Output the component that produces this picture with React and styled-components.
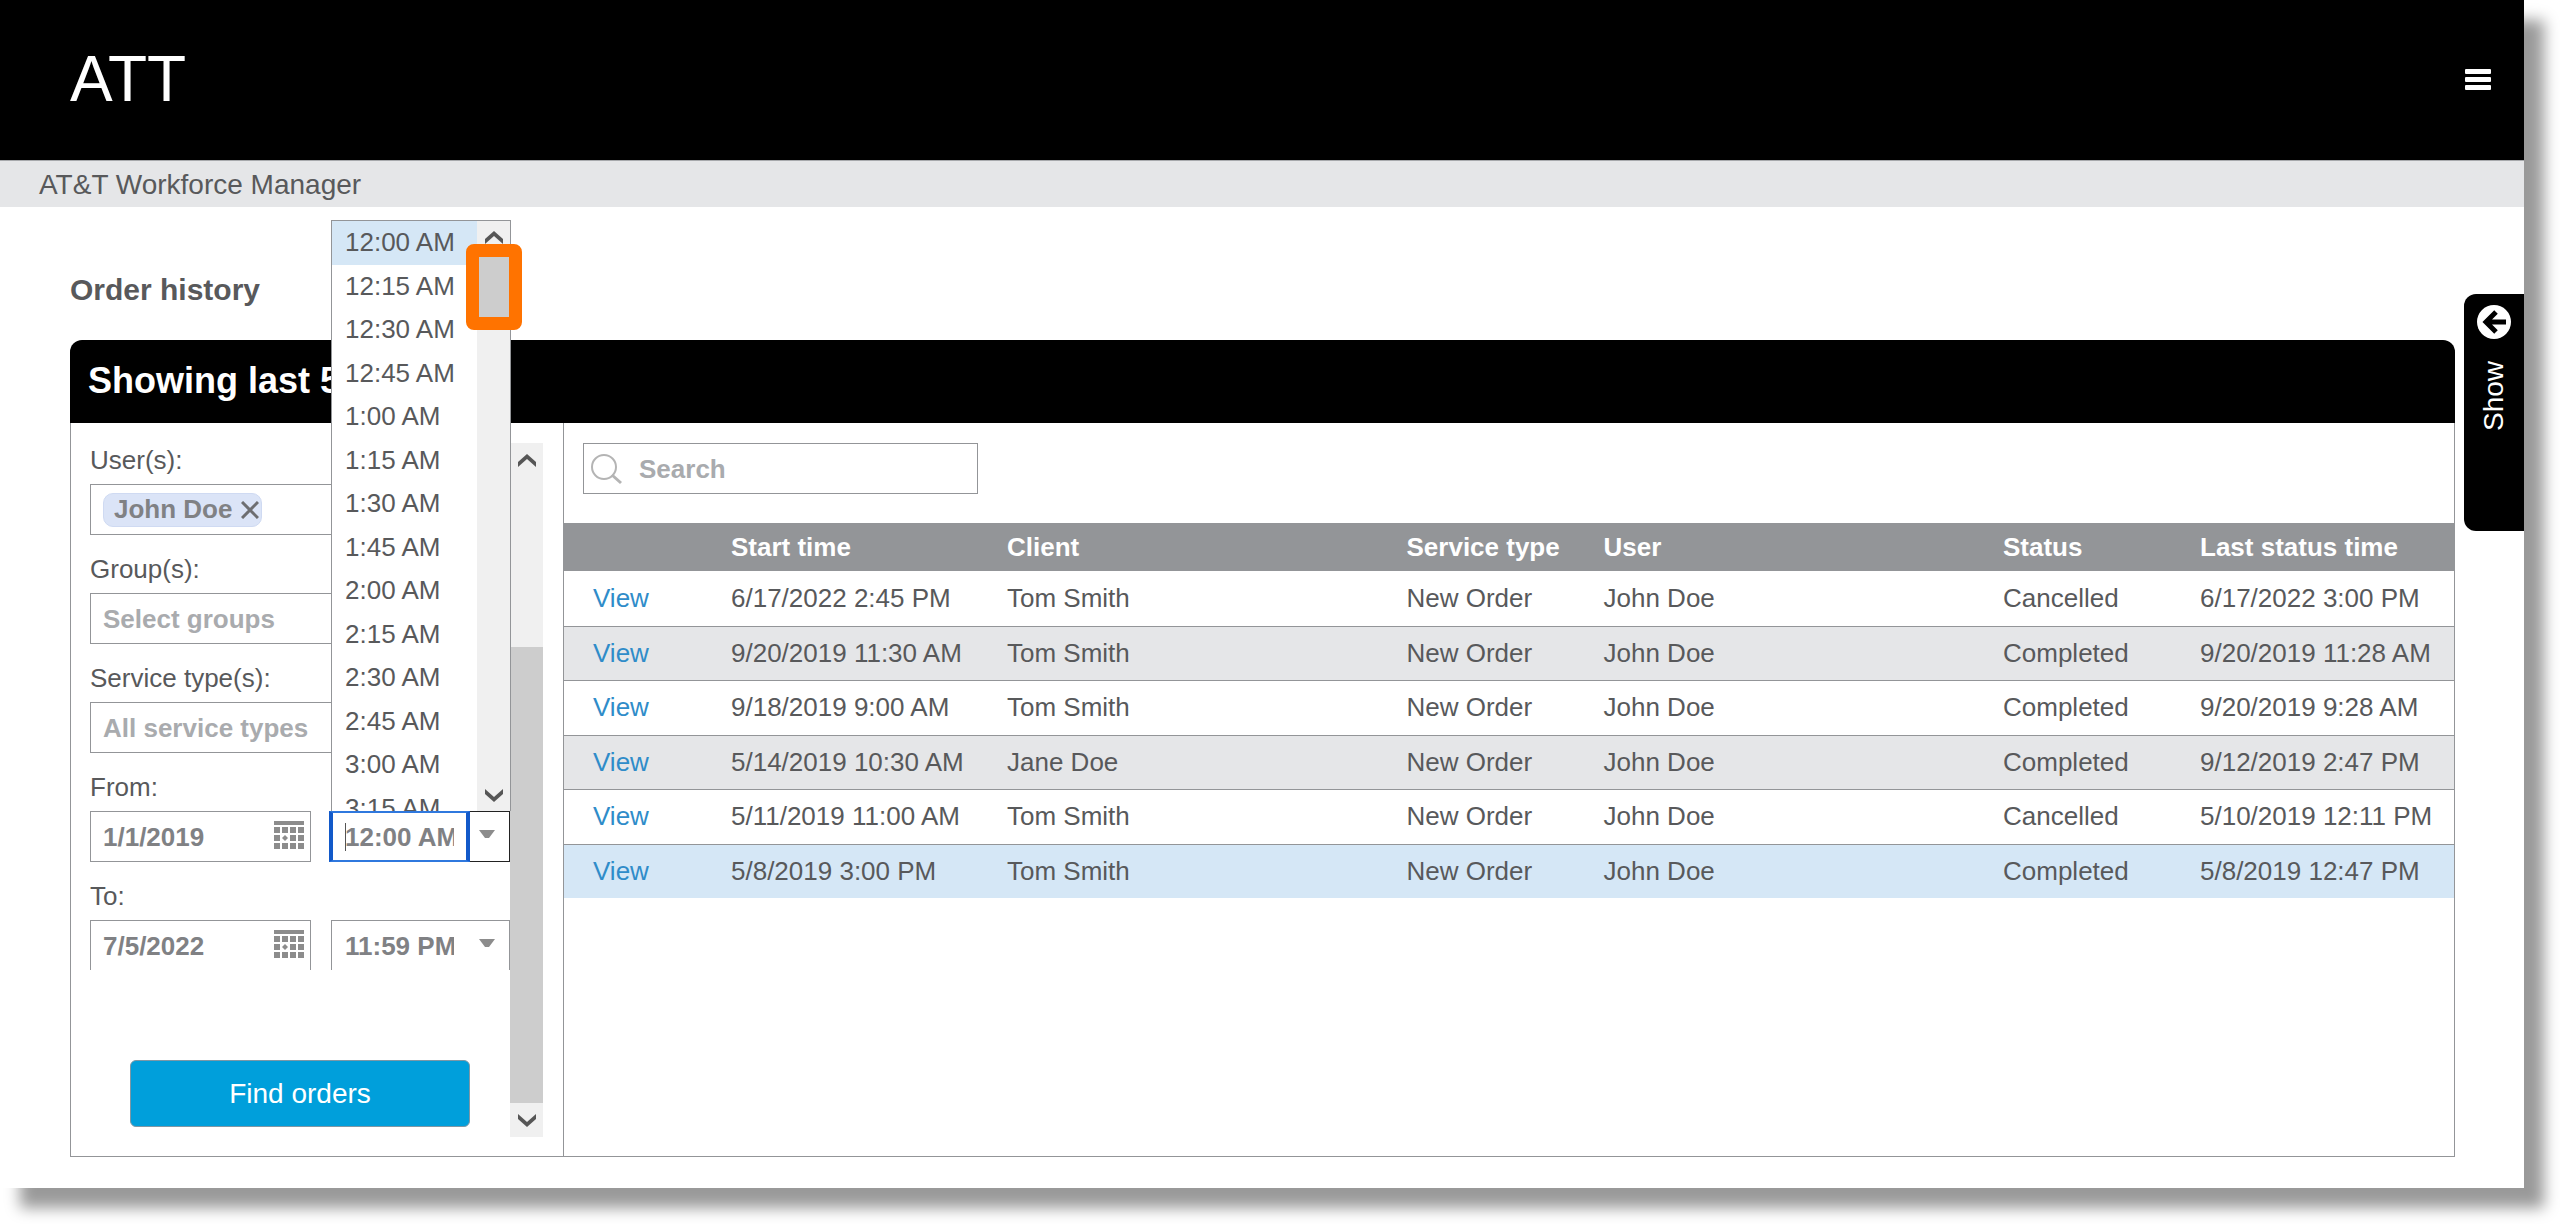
import React, { Component } from 'react';
import styled, { createGlobalStyle } from 'styled-components';

const textGray = '#58595b';
const lineGray = '#939598';
const stripeGray = '#e5e6e8';
const selectedBlue = '#d5e7f6';

const times = [
  '12:00 AM', '12:15 AM', '12:30 AM', '12:45 AM', '1:00 AM', '1:15 AM', '1:30 AM',
  '1:45 AM', '2:00 AM', '2:15 AM', '2:30 AM', '2:45 AM', '3:00 AM', '3:15 AM',
];

const orders = [
  { start: '6/17/2022 2:45 PM', client: 'Tom Smith', status: 'Cancelled', last: '6/17/2022 3:00 PM' },
  { start: '9/20/2019 11:30 AM', client: 'Tom Smith', status: 'Completed', last: '9/20/2019 11:28 AM' },
  { start: '9/18/2019 9:00 AM', client: 'Tom Smith', status: 'Completed', last: '9/20/2019 9:28 AM' },
  { start: '5/14/2019 10:30 AM', client: 'Jane Doe', status: 'Completed', last: '9/12/2019 2:47 PM' },
  { start: '5/11/2019 11:00 AM', client: 'Tom Smith', status: 'Cancelled', last: '5/10/2019 12:11 PM' },
  { start: '5/8/2019 3:00 PM', client: 'Tom Smith', status: 'Completed', last: '5/8/2019 12:47 PM', selected: true },
];

const Chevron = ({ down }) => (
  <svg width="18" height="13" viewBox="0 0 18 13" fill="#565656" aria-hidden="true">
    <path d={down ? 'M0 0L9 8L18 0V5L9 13L0 5Z' : 'M0 13L9 5L18 13V8L9 0L0 8Z'} />
  </svg>
);

const CalendarIcon = () => (
  <svg width="30" height="28" viewBox="0 0 30 28" fill="#8c8c8c" aria-hidden="true">
    <rect width="30" height="4" />
    {[6, 14, 22].map(y => [0, 8, 16, 24].map(x => (
      x === 8 && y === 14
        ? <path key={x} d="M11 14L14 17L11 20L8 17Z" />
        : <rect key={x} x={x} y={y} width="6" height="6" />
    )))}
  </svg>
);

const ArrowIcon = () => (
  <svg width="16" height="9" viewBox="0 0 16 9" fill="#8c8c8c" aria-hidden="true">
    <path d="M0 0H16L10 8H6Z" />
  </svg>
);

const SearchIcon = () => (
  <svg width="32" height="32" viewBox="0 0 32 32" fill="none" stroke="#b4b4b4" aria-hidden="true">
    <circle cx="13" cy="14" r="12" strokeWidth="2" />
    <path d="M21 22L30 30" strokeWidth="3" />
  </svg>
);

const DateRow = ({ id, label, date, time, open }) => (
  <Group>
    <Label htmlFor={id}>{label}</Label>
    <FieldRow>
      <Field $width="221px">
        <FieldInput id={id} defaultValue={date} />
        <CalendarButton type="button" aria-label={`${label} calendar`}><CalendarIcon /></CalendarButton>
      </Field>
      <Field $grow $active={open}>
        <TimeInput aria-label={`${label} time`} role="combobox" aria-expanded={!!open} aria-controls="times" defaultValue={time} />
        <ArrowButton type="button" aria-label={`${label} open times`}><ArrowIcon /></ArrowButton>
        {open && <FocusRing />}
        {open && <Caret />}
      </Field>
    </FieldRow>
  </Group>
);

const TimePopup = () => (
  <Popup>
    <TimeList id="times" role="listbox" aria-label="Times">
      {times.map((time, i) => (
        <TimeOption key={time} role="option" aria-selected={i === 0} $selected={i === 0}>{time}</TimeOption>
      ))}
    </TimeList>
    <ScrollBar>
      <ScrollEnd $height="32px"><Chevron /></ScrollEnd>
      <ScrollThumb $height="64px" />
      <ScrollSpace />
      <ScrollEnd $height="32px"><Chevron down /></ScrollEnd>
    </ScrollBar>
    <Highlight />
  </Popup>
);

const Filters = () => (
  <FilterPane>
    <FilterForm onSubmit={e => e.preventDefault()}>
      <FilterScroll>
        <Group>
          <Label htmlFor="users">User(s):</Label>
          <Field>
            <Tag>
              John Doe
              <TagRemove type="button" aria-label="Remove John Doe">
                <svg width="18" height="18" viewBox="0 0 18 18" stroke="#6d6e71" strokeWidth="3" aria-hidden="true">
                  <path d="M1 1L17 17M17 1L1 17" />
                </svg>
              </TagRemove>
            </Tag>
            <FieldInput id="users" />
          </Field>
        </Group>
        <Group>
          <Label htmlFor="groups">Group(s):</Label>
          <Field><FieldInput id="groups" placeholder="Select groups" /></Field>
        </Group>
        <Group>
          <Label htmlFor="services">Service type(s):</Label>
          <Field><FieldInput id="services" placeholder="All service types" /></Field>
        </Group>
        <DateRow id="from" label="From:" date="1/1/2019" time="12:00 AM" open />
        <DateRow id="to" label="To:" date="7/5/2022" time="11:59 PM" />
      </FilterScroll>
      <FindButton type="submit">Find orders</FindButton>
    </FilterForm>
    <ScrollBar>
      <ScrollEnd $height="34px"><Chevron /></ScrollEnd>
      <ScrollSpace />
      <ScrollThumb $height="456px" />
      <ScrollEnd $height="34px"><Chevron down /></ScrollEnd>
    </ScrollBar>
    <TimePopup />
  </FilterPane>
);

const Orders = () => (
  <Results>
    <SearchBox>
      <SearchIcon />
      <SearchInput type="search" aria-label="Search" placeholder="Search" />
    </SearchBox>
    <Table>
      <colgroup>
        <Col $width="138px" />
        <Col $width="276px" />
        <Col />
        <Col $width="197px" />
        <Col />
        <Col $width="197px" />
        <Col $width="283px" />
      </colgroup>
      <thead>
        <tr>
          <HeadCell />
          <HeadCell>Start time</HeadCell>
          <HeadCell>Client</HeadCell>
          <HeadCell>Service type</HeadCell>
          <HeadCell>User</HeadCell>
          <HeadCell>Status</HeadCell>
          <HeadCell>Last status time</HeadCell>
        </tr>
      </thead>
      <tbody>
        {orders.map(order => (
          <Row key={order.start} $selected={order.selected}>
            <Cell><ViewLink href="#view">View</ViewLink></Cell>
            <Cell>{order.start}</Cell>
            <Cell>{order.client}</Cell>
            <Cell>New Order</Cell>
            <Cell>John Doe</Cell>
            <Cell>{order.status}</Cell>
            <Cell>{order.last}</Cell>
          </Row>
        ))}
      </tbody>
    </Table>
  </Results>
);

export default class App extends Component {
  render() {
    return (
      <Window>
        <GlobalStyle />
        <Header>
          <Brand>ATT</Brand>
          <MenuButton type="button" aria-label="Menu">
            <MenuBar /><MenuBar /><MenuBar />
          </MenuButton>
        </Header>
        <ProductBar>AT&amp;T Workforce Manager</ProductBar>
        <Main>
          <Content>
            <Heading>Order history</Heading>
            <PanelTitle>Showing last 5</PanelTitle>
            <PanelBody>
              <Filters />
              <Orders />
            </PanelBody>
          </Content>
          <ShowTab type="button">
            <svg width="34" height="34" viewBox="0 0 34 34" aria-hidden="true">
              <circle cx="17" cy="17" r="17" fill="#fff" />
              <path d="M29 17H10M19 7L9 17L19 27" fill="none" stroke="#000" strokeWidth="5" />
            </svg>
            <ShowText>Show</ShowText>
          </ShowTab>
        </Main>
      </Window>
    )
  }
}

const GlobalStyle = createGlobalStyle`
  * {
    box-sizing: border-box;
  }

  body {
    min-height: 100vh;
    margin: 0;
    background: #fff;
  }

  body, button, input {
    font-family: "Liberation Sans", Arial, sans-serif;
    font-size: 26px;
    color: ${textGray};
  }

  button {
    padding: 0;
    border: 0;
    background: none;
    cursor: pointer;
  }
`;

const Window = styled.div`
  width: calc(100% - 36px);
  background: #fff;
  box-shadow: 20px 20px 14px rgba(0, 0, 0, .4);
`;

const Header = styled.header`
  display: flex;
  align-items: center;
  justify-content: space-between;
  height: 160px;
  padding: 0 33px 2px 70px;
  background: #000;
`;

const Brand = styled.div`
  font-size: 64px;
  color: #fff;
`;

const MenuButton = styled.button`
  display: flex;
  flex-direction: column;
  gap: 3px;
  width: 26px;
`;

const MenuBar = styled.span`
  height: 5px;
  border-radius: 1px;
  background: #fff;
`;

const ProductBar = styled.div`
  height: 47px;
  padding-left: 39px;
  border-top: 1px solid #a7a9ac;
  font-size: 28px;
  line-height: 48px;
  background: ${stripeGray};
`;

const Main = styled.main`
  display: flex;
  align-items: flex-start;
  gap: 9px;
  padding: 0 0 31px 70px;
`;

const Content = styled.section`
  flex: 1;
  min-width: 0;
`;

const Heading = styled.h1`
  margin: 0;
  padding: 65px 0 32px;
  font-size: 30px;
  line-height: 36px;
`;

const PanelTitle = styled.h2`
  margin: 0;
  height: 83px;
  padding-left: 18px;
  border-radius: 12px 12px 0 0;
  font-size: 36px;
  line-height: 82px;
  color: #fff;
  background: #000;
`;

const PanelBody = styled.div`
  display: flex;
  border: 1px solid ${lineGray};
  border-top: 0;
`;

const FilterPane = styled.div`
  position: relative;
  display: flex;
  flex: none;
  width: 493px;
  padding: 20px 20px 19px 19px;
  border-right: 1px solid ${lineGray};
`;

const FilterForm = styled.form`
  flex: 1;
  min-width: 0;
  display: flex;
  flex-direction: column;
  align-items: center;
`;

const FilterScroll = styled.div`
  width: 100%;
  height: 527px;
  overflow: hidden;
`;

const Group = styled.div`
  margin-bottom: 17px;
`;

const Label = styled.label`
  display: block;
  margin-bottom: 6px;
  line-height: 35px;
`;

const FieldRow = styled.div`
  display: flex;
  gap: 20px;
`;

const Field = styled.div`
  position: relative;
  display: flex;
  align-items: center;
  flex: ${props => (props.$grow ? '1' : 'none')};
  width: ${props => props.$width || 'auto'};
  min-width: 0;
  height: 51px;
  border: 1px solid ${props => (props.$active ? '#222' : lineGray)};
`;

const FieldInput = styled.input`
  flex: 1;
  min-width: 0;
  height: 100%;
  padding: 2px 12px 0;
  border: 0;
  outline: 0;
  font-weight: bold;
  color: #808184;
  background: none;

  &::placeholder {
    color: #a9abae;
    opacity: 1;
  }
`;

const TimeInput = styled(FieldInput)`
  padding: 2px 15px 0 13px;
`;

const CalendarButton = styled.button`
  display: flex;
  margin: 0 6px 4px 0;
`;

const ArrowButton = styled.button`
  display: flex;
  align-items: center;
  justify-content: center;
  flex: none;
  width: 40px;
  height: 100%;
  padding: 0 4px 4px 0;
`;

const FocusRing = styled.span`
  position: absolute;
  top: -1px;
  left: -3px;
  width: 141px;
  height: 51px;
  border: solid;
  border-width: 2px 4px;
  border-color: #2f78de #1259c9;
  pointer-events: none;
`;

const Caret = styled.span`
  position: absolute;
  top: 11px;
  left: 13px;
  width: 1px;
  height: 28px;
  background: #555;
`;

const Tag = styled.span`
  display: flex;
  align-items: center;
  gap: 9px;
  height: 34px;
  margin-left: 12px;
  padding: 0 2px 0 10px;
  border: 1px solid #cfdaf2;
  border-radius: 10px;
  font-weight: bold;
  white-space: nowrap;
  color: #808184;
  background: #dbe4f7;
`;

const TagRemove = styled.button`
  display: flex;
`;

const FindButton = styled.button`
  width: 340px;
  height: 67px;
  margin: 90px 0 10px;
  border: 1px solid #7e97a5;
  border-radius: 6px;
  font-size: 28px;
  color: #fff;
  background: #009fdb;
`;

const ScrollBar = styled.div`
  display: flex;
  flex: none;
  flex-direction: column;
  width: 33px;
  background: #f0f0f0;
`;

const ScrollEnd = styled.div`
  display: flex;
  align-items: center;
  justify-content: center;
  height: ${props => props.$height};
`;

const ScrollThumb = styled.div`
  height: ${props => props.$height};
  background: #cdcdcd;
`;

const ScrollSpace = styled.div`
  flex: 1;
`;

const Popup = styled.div`
  position: absolute;
  z-index: 2;
  top: -203px;
  left: 260px;
  display: flex;
  width: 180px;
  height: 591px;
  border: 1px solid ${lineGray};
  border-bottom: 0;
  background: #fff;
`;

/* the rows share the height, the last one is cut by the popup edge */
const TimeList = styled.ul`
  flex: 1;
  display: grid;
  grid-template-rows: repeat(14, 1fr);
  height: 609px;
  margin: 0;
  padding: 0;
  list-style: none;
  clip-path: inset(0 0 19px 0);
`;

const TimeOption = styled.li`
  display: flex;
  align-items: center;
  padding-left: 13px;
  white-space: nowrap;
  background: ${props => (props.$selected ? selectedBlue : 'transparent')};
`;

const Highlight = styled.div`
  position: absolute;
  top: 23px;
  left: 134px;
  width: 56px;
  height: 86px;
  border: 13px solid #ff7300;
  border-radius: 8px;
`;

const Results = styled.div`
  flex: 1;
  min-width: 0;
  padding-top: 20px;
`;

const SearchBox = styled.div`
  display: flex;
  align-items: center;
  gap: 16px;
  width: 395px;
  height: 51px;
  margin: 0 0 29px 19px;
  padding-left: 7px;
  border: 1px solid ${lineGray};
`;

const SearchInput = styled(FieldInput)`
  padding: 2px 0 0;
  appearance: none;
`;

const Table = styled.table`
  width: 100%;
  border-collapse: collapse;
  table-layout: fixed;
`;

const Col = styled.col`
  width: ${props => props.$width || 'auto'};
`;

const HeadCell = styled.th`
  height: 48px;
  padding: 0 0 0 29px;
  text-align: left;
  white-space: nowrap;
  color: #fff;
  background: ${lineGray};
`;

const Row = styled.tr`
  height: 55px;
  background: ${props => (props.$selected ? selectedBlue : '#fff')};

  &:nth-child(even) {
    height: 54px;
    background: ${props => (props.$selected ? selectedBlue : stripeGray)};
  }

  & + & {
    border-top: 1px solid ${lineGray};
  }
`;

const Cell = styled.td`
  padding: 0 0 0 29px;
  white-space: nowrap;
`;

const ViewLink = styled.a`
  text-decoration: none;
  color: #2f8cc9;
`;

const ShowTab = styled.button`
  display: flex;
  flex-direction: column;
  align-items: center;
  gap: 22px;
  width: 60px;
  height: 237px;
  margin-top: 87px;
  padding-top: 11px;
  border-radius: 12px 0 0 12px;
  background: #000;
`;

const ShowText = styled.span`
  writing-mode: vertical-rl;
  transform: rotate(180deg);
  font-size: 28px;
  color: #fff;
`;
